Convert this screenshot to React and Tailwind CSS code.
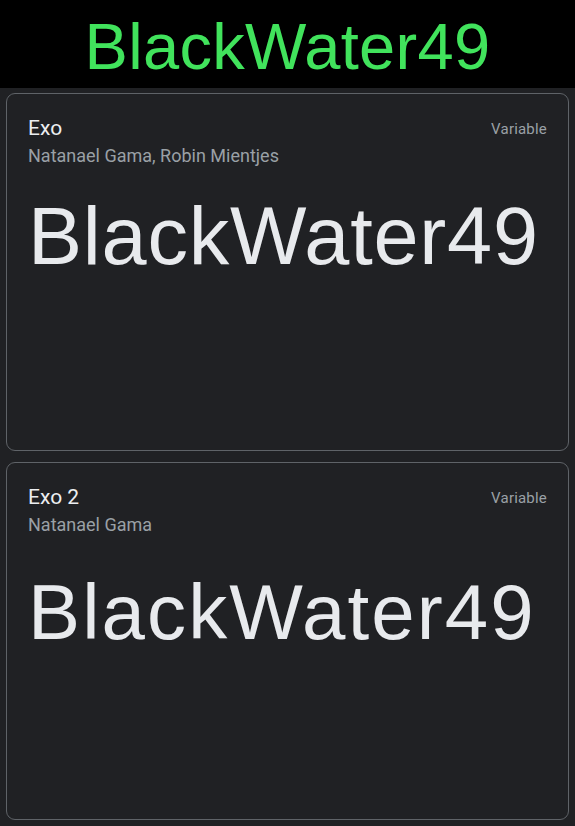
const fonts = [
  {
    name: "Exo",
    author: "Natanael Gama, Robin Mientjes",
    sample: "text-[81px] leading-[81px] mt-[28px] tracking-[0.8px]",
  },
  {
    name: "Exo 2",
    author: "Natanael Gama",
    sample: "text-[78px] leading-[78px] mt-[36px] tracking-[2.1px]",
  },
];

function FontCard({ font }) {
  return (
    <div className="h-[358px] rounded-[9px] border border-[#5f6368] bg-[#202124] px-[21px] pt-[20px]">
      <div className="flex items-start justify-between">
        <div className="min-w-0">
          <div className="font-['Roboto',sans-serif] text-[21px] leading-[28px] text-[#eceef1]">
            {font.name}
          </div>
          <div className="mt-[2px] font-['Roboto',sans-serif] text-[18px] leading-[24px] text-[#9aa0a6]">
            {font.author}
          </div>
        </div>
        <div className="mt-[5px] font-['Roboto',sans-serif] text-[15px] leading-[20px] tracking-[0.2px] text-[#9aa0a6]">
          Variable
        </div>
      </div>
      <div
        className={
          "whitespace-nowrap font-['Liberation_Sans',Arial,sans-serif] text-[#e8eaed] " +
          font.sample
        }
      >
        BlackWater49
      </div>
    </div>
  );
}

export default function App() {
  return (
    <div className="min-h-[826px] w-full bg-[#202124]">
      {/* header */}
      <div className="flex h-[88px] items-center justify-center bg-black pt-[5px]">
        <span className="font-['Liberation_Sans',Arial,sans-serif] text-[65px] leading-none tracking-[0.3px] text-[#41e35c]">
          BlackWater49
        </span>
      </div>

      {/* cards */}
      <div className="flex flex-col gap-[11px] px-[6px] pt-[5px]">
        {fonts.map((f) => (
          <FontCard key={f.name} font={f} />
        ))}
      </div>
    </div>
  );
}
